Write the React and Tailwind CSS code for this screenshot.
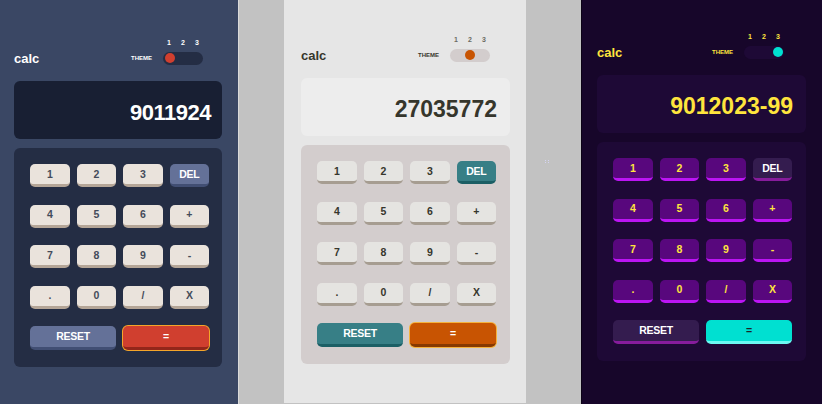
import React from 'react';

const themes = [
  {
    id: 1,
    panel: 'w-[238px] h-[404px] bg-[#3a4764] pt-[39px] pl-[14px]',
    inner: 'w-[208px]',
    head: 'pr-[19px]',
    nums: 'text-white',
    calc: 'text-white',
    theme: 'text-white',
    toggle: 'bg-[#242d44] justify-start px-[2px]',
    knob: 'bg-[#d03f2f]',
    screen: 'bg-[#181f33] text-white text-[22px] tracking-[-0.5px] pr-[11px]',
    pad: 'bg-[#242d44] pr-[13px]',
    num: 'bg-[#eae3dc] border-[#b4a597] text-[#444b5a]',
    del: 'bg-[#647198] border-[#414e73] text-white',
    eq: 'bg-[#d03f2f] border-[#93261a] text-white ring-1 ring-[#f4a52a]',
    value: '9011924',
  },
  {
    id: 2,
    panel: 'w-[242px] h-[403px] bg-[#e6e6e6] pt-[36px] pl-[17px]',
    inner: 'w-[209px]',
    head: 'pr-[20px]',
    nums: 'text-[#6b6b63]',
    calc: 'text-[#36362c]',
    theme: 'text-[#36362c]',
    toggle: 'bg-[#d3cdcd] justify-center px-[2px]',
    knob: 'bg-[#c85402]',
    screen: 'bg-[#ededed] text-[#36362c] text-[23px] pr-[13px]',
    pad: 'bg-[#d3cdcd] pr-[14px]',
    num: 'bg-[#e5e4e1] border-[#a69d91] text-[#36362c]',
    del: 'bg-[#377f86] border-[#1b5f65] text-white',
    eq: 'bg-[#c85402] border-[#873901] text-white ring-1 ring-[#f6b23c]',
    value: '27035772',
  },
  {
    id: 3,
    panel: 'w-[240px] h-[404px] bg-[#17062a] pt-[33px] pl-[15px]',
    inner: 'w-[209px]',
    head: 'pr-[22px]',
    nums: 'text-[#ffe53d]',
    calc: 'text-[#ffe53d]',
    theme: 'text-[#ffe53d]',
    toggle: 'bg-[#1e0936] justify-end px-[1px]',
    knob: 'bg-[#00e0d1]',
    screen: 'bg-[#1e0936] text-[#ffe53d] text-[23px] pr-[13px]',
    pad: 'bg-[#1e0936] pr-[14px]',
    num: 'bg-[#58077d] border-[#bc15f4] text-[#ffe53d]',
    del: 'bg-[#341c4f] border-[#871c9c] text-white',
    eq: 'bg-[#00e0d1] border-[#6cf9f2] text-[#1b2428]',
    value: '9012023-99',
  },
];

const keys = ['1', '2', '3', 'DEL', '4', '5', '6', '+', '7', '8', '9', '-', '.', '0', '/', 'X'];

function Key({ label, cls, wide }) {
  return (
    <button
      className={`${wide ? 'col-span-2 h-[24px]' : 'h-[23px]'} rounded-[5px] border-b-[3px] flex items-center justify-center text-[10.5px] font-bold tracking-[-0.3px] leading-none ${cls}`}
    >
      {label}
    </button>
  );
}

function Calculator({ t }) {
  return (
    <div className={`shrink-0 ${t.panel}`} style={{ fontFamily: '"Liberation Sans", Arial, sans-serif' }}>
      <div className={t.inner}>
        {/* Header */}
        <div className={t.head}>
          <div className="flex justify-end">
            <div className={`w-[40px] flex justify-between px-[4px] text-[7px] font-bold leading-[7px] ${t.nums}`}>
              <span>1</span>
              <span>2</span>
              <span>3</span>
            </div>
          </div>
          <div className="mt-[5px] flex items-center justify-between">
            <span className={`text-[13px] font-bold leading-none mt-[1px] ${t.calc}`}>calc</span>
            <div className="flex items-center gap-[11px]">
              <span className={`text-[6px] font-bold leading-none ${t.theme}`}>THEME</span>
              <div className={`w-[40px] h-[13px] rounded-full flex items-center ${t.toggle}`}>
                <div className={`w-[10px] h-[10px] rounded-full ${t.knob}`} />
              </div>
            </div>
          </div>
        </div>

        {/* Screen */}
        <div className={`mt-[16px] h-[58px] rounded-[6px] flex items-end justify-end pb-[15px] font-bold leading-none ${t.screen}`}>
          {t.value}
        </div>

        {/* Keypad */}
        <div className={`mt-[9px] rounded-[6px] pt-[16px] pl-[16px] pb-[17px] ${t.pad}`}>
          <div className="grid grid-cols-4 gap-x-[7px] gap-y-[17.5px]">
            {keys.map((k) => (
              <Key key={k} label={k} cls={k === 'DEL' ? t.del : t.num} />
            ))}
            <Key label="RESET" cls={t.del} wide />
            <Key label="=" cls={t.eq} wide />
          </div>
        </div>
      </div>
    </div>
  );
}

export default function App() {
  return (
    <div className="w-[822px] h-[404px] bg-[#c2c2c2] flex items-start overflow-hidden">
      <Calculator t={themes[0]} />
      <div className="w-[46px] h-[404px] shrink-0 border-l border-[#dadada]" />
      <Calculator t={themes[1]} />
      <div className="w-[56px] h-[404px] shrink-0 border-r border-[#0c0316] pt-[160px] pl-[19px]">
        <svg width="4" height="3" viewBox="0 0 4 3">
          <rect x="0" y="0" width="1" height="1" fill="#d4d4f2" />
          <rect x="3" y="0" width="1" height="1" fill="#d4d4f2" />
          <rect x="0" y="2" width="1" height="1" fill="#d4d4f2" />
          <rect x="3" y="2" width="1" height="1" fill="#d4d4f2" />
        </svg>
      </div>
      <Calculator t={themes[2]} />
    </div>
  );
}
